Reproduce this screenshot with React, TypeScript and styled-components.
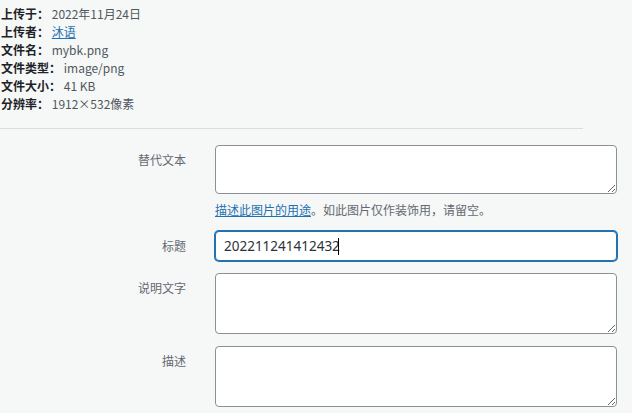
import styled, { createGlobalStyle } from 'styled-components'

const Global = createGlobalStyle`
    html, body {
        margin: 0;
        padding: 0;
        background: #f6f7f7;
    }
    body {
        font-family: "Noto Sans CJK SC", "Noto Sans", sans-serif;
        color: #3c434a;
    }
`

const Page = styled.div`
    width: 632px;
    padding-top: 5px;
`

const Meta = styled.div`
    font-size: 12px;
    line-height: 18px;
    padding-left: 1px;
    color: #50575e;
    strong {
        font-weight: 700;
        color: #1d2327;
    }
    a {
        color: #2271b1;
        text-decoration: underline;
    }
`

const Divider = styled.hr`
    width: 583px;
    margin: 15px 0 16px 0;
    border: none;
    border-top: 1px solid #dcdcde;
`

const Row = styled.div`
    display: grid;
    grid-template-columns: 186px 402px;
    column-gap: 29px;
    margin-bottom: 12px;
`

const Label = styled.label`
    text-align: right;
    font-size: 12px;
    line-height: 18px;
    padding-top: 6px;
    color: #646970;
`

const Field = styled.div`
    position: relative;
    display: flex;
    flex-direction: column;
`

const Area = styled.textarea<{ $h: number }>`
    box-sizing: border-box;
    width: 100%;
    height: ${p => p.$h}px;
    margin: 0;
    border: 1px solid #8c8f94;
    border-radius: 4px;
    background: #fff;
    font: inherit;
    resize: vertical;
    outline: none;
`

const Input = styled.input`
    box-sizing: border-box;
    width: 100%;
    height: 30px;
    margin: 0;
    padding: 0 8px;
    border: 1px solid #2271b1;
    box-shadow: 0 0 0 1px #2271b1;
    border-radius: 4px;
    background: #fff;
    font-family: "Noto Sans", sans-serif;
    font-size: 13.5px;
    color: #2c3338;
    outline: none;
    caret-color: transparent;
`

const Caret = styled.span`
    position: absolute;
    left: 123px;
    top: 7px;
    width: 1px;
    height: 17px;
    background: #000;
`

const Help = styled.p`
    margin: 7px 0 0 0;
    font-size: 12px;
    line-height: 18px;
    color: #646970;
    a {
        color: #2271b1;
        text-decoration: underline;
    }
`

const meta: [string, string, boolean?][] = [
    ['上传于：', '2022年11月24日'],
    ['上传者：', '沐语', true],
    ['文件名：', 'mybk.png'],
    ['文件类型：', 'image/png'],
    ['文件大小：', '41 KB'],
    ['分辨率：', '1912×532像素'],
]

export default function App() {
    return (
        <Page>
            <Global />
            <Meta>
                {meta.map(([k, v, link]) => (
                    <div key={k}>
                        <strong>{k}</strong> {link ? <a href="#">{v}</a> : v}
                    </div>
                ))}
            </Meta>
            <Divider />
            <Row>
                <Label>替代文本</Label>
                <Field>
                    <Area $h={49} />
                    <Help>
                        <a href="#">描述此图片的用途</a>。如此图片仅作装饰用，请留空。
                    </Help>
                </Field>
            </Row>
            <Row>
                <Label>标题</Label>
                <Field>
                    <Input defaultValue="202211241412432" />
                    <Caret />
                </Field>
            </Row>
            <Row>
                <Label>说明文字</Label>
                <Field>
                    <Area $h={61} />
                </Field>
            </Row>
            <Row>
                <Label>描述</Label>
                <Field>
                    <Area $h={61} />
                </Field>
            </Row>
        </Page>
    )
}
